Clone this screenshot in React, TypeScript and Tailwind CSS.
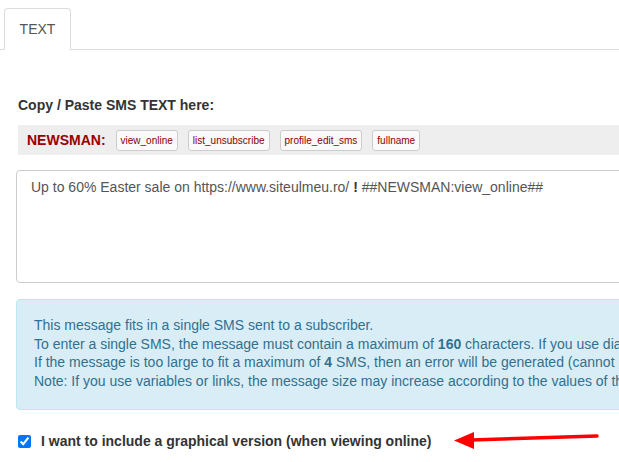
import React from 'react';

const tags = ['view_online', 'list_unsubscribe', 'profile_edit_sms', 'fullname'];

export default function App() {
  return (
    <div className="w-[619px] h-[462px] overflow-hidden bg-white font-['Liberation_Sans',Arial,sans-serif]">
      <div className="w-[1000px]">
        {/* Tabs */}
        <div className="h-[50px] border-b border-[#ddd] flex items-end pl-[4px]">
          <div className="-mb-px h-[42px] w-[67px] bg-white border border-b-0 border-[#ddd] rounded-t-[4px] flex items-center justify-center text-[14px] text-[#555]">
            TEXT
          </div>
        </div>

        <div className="pl-[16px]">
          <div className="mt-[46px] pl-[2px] text-[14px] leading-[18px] font-bold text-[#333]">
            Copy / Paste SMS TEXT here:
          </div>

          {/* Variables bar */}
          <div className="mt-[11px] ml-[2px] h-[30px] bg-[#eee] flex items-center pl-[9px] gap-[10px]">
            <span className="text-[14px] font-bold text-[#990000]">NEWSMAN:</span>
            {tags.map((t) => (
              <span
                key={t}
                className="h-[21px] px-[4px] flex items-center bg-[#fafafa] border border-[#ccc] rounded-[3px] text-[10px] text-[#8b0000]"
              >
                {t}
              </span>
            ))}
          </div>

          {/* Message box */}
          <div className="mt-[15px] h-[113px] border border-[#ccc] rounded-[4px] px-[14px] py-[7px] text-[14px] leading-[18px] text-[#555]">
            Up to 60% Easter sale on https://www.siteulmeu.ro/ <b className="text-[#333]">!</b> ##NEWSMAN:view_online##
          </div>

          {/* Info */}
          <div className="mt-[16px] h-[111px] bg-[#d9edf7] border border-[#bce8f1] rounded-[4px] pl-[17px] pt-[16px] text-[14px] leading-[18.5px] text-[#31708f] whitespace-nowrap">
            <p>This message fits in a single SMS sent to a subscriber.</p>
            <p>
              To enter a single SMS, the message must contain a maximum of <b>160</b> characters. If you use diacritics, the limit is lower.
            </p>
            <p>
              If the message is too large to fit a maximum of <b>4</b> SMS, then an error will be generated (cannot be sent).
            </p>
            <p>Note: If you use variables or links, the message size may increase according to the values of the variables.</p>
          </div>

          {/* Option */}
          <div className="mt-[22px] pl-[2px] flex items-center h-[18px]">
            <input type="checkbox" defaultChecked className="w-[13px] h-[13px] m-0 accent-[#0075ff]" />
            <span className="ml-[10px] text-[14px] font-bold text-[#333]">
              I want to include a graphical version (when viewing online)
            </span>
            <svg className="ml-[22px] -mt-[2px]" width="150" height="20" viewBox="0 0 150 20">
              <line x1="17" y1="10" x2="143" y2="6" stroke="#f00" strokeWidth="3.5" strokeLinecap="round" />
              <polygon points="0,10.5 20,2 20,19" fill="#f00" />
            </svg>
          </div>
        </div>
      </div>
    </div>
  );
}
